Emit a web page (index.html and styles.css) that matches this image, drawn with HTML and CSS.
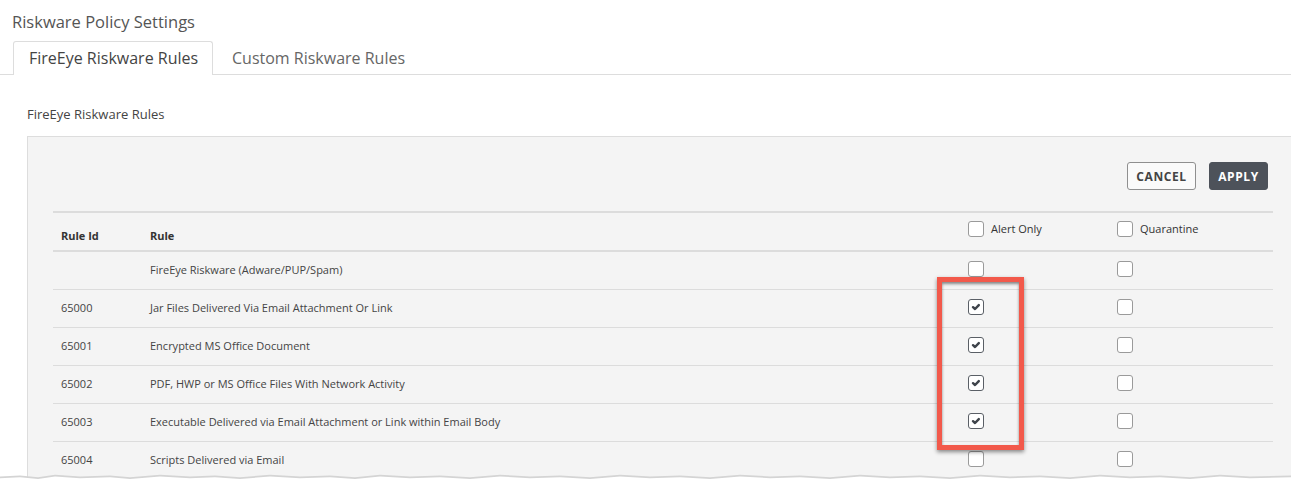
FILE: index.html
```html
<!DOCTYPE html>
<html>
<head>
<meta charset="utf-8">
<link rel="stylesheet" href="styles.css">
</head>
<body>
<div class="page">
  <h1 class="title">Riskware Policy Settings</h1>
  <div class="tabs">
    <div class="tab active">FireEye Riskware Rules</div>
    <div class="tab">Custom Riskware Rules</div>
  </div>
  <div class="section-label">FireEye Riskware Rules</div>
  <div class="panel">
    <div class="actions">
      <button class="btn btn-cancel">CANCEL</button>
      <button class="btn btn-apply">APPLY</button>
    </div>
    <div class="grid">
      <div class="row head">
        <div class="cell id">Rule Id</div>
        <div class="cell rule">Rule</div>
        <div class="cell chk"><span class="box"></span><span class="chk-label">Alert Only</span></div>
        <div class="cell chk"><span class="box"></span><span class="chk-label">Quarantine</span></div>
      </div>
      <div class="row">
        <div class="cell id"></div>
        <div class="cell rule">FireEye Riskware (Adware/PUP/Spam)</div>
        <div class="cell chk"><span class="box"></span></div>
        <div class="cell chk"><span class="box"></span></div>
      </div>
      <div class="row">
        <div class="cell id">65000</div>
        <div class="cell rule">Jar Files Delivered Via Email Attachment Or Link</div>
        <div class="cell chk"><span class="box checked"><svg viewBox="0 0 16 16"><path d="M4.6 8.2 L6.9 10.3 L11.2 5.9" /></svg></span></div>
        <div class="cell chk"><span class="box"></span></div>
      </div>
      <div class="row">
        <div class="cell id">65001</div>
        <div class="cell rule">Encrypted MS Office Document</div>
        <div class="cell chk"><span class="box checked"><svg viewBox="0 0 16 16"><path d="M4.6 8.2 L6.9 10.3 L11.2 5.9" /></svg></span></div>
        <div class="cell chk"><span class="box"></span></div>
      </div>
      <div class="row">
        <div class="cell id">65002</div>
        <div class="cell rule">PDF, HWP or MS Office Files With Network Activity</div>
        <div class="cell chk"><span class="box checked"><svg viewBox="0 0 16 16"><path d="M4.6 8.2 L6.9 10.3 L11.2 5.9" /></svg></span></div>
        <div class="cell chk"><span class="box"></span></div>
      </div>
      <div class="row">
        <div class="cell id">65003</div>
        <div class="cell rule">Executable Delivered via Email Attachment or Link within Email Body</div>
        <div class="cell chk"><span class="box checked"><svg viewBox="0 0 16 16"><path d="M4.6 8.2 L6.9 10.3 L11.2 5.9" /></svg></span></div>
        <div class="cell chk"><span class="box"></span></div>
      </div>
      <div class="row last">
        <div class="cell id">65004</div>
        <div class="cell rule">Scripts Delivered via Email</div>
        <div class="cell chk"><span class="box"></span></div>
        <div class="cell chk"><span class="box"></span></div>
      </div>
    </div>
  </div>
  <div class="highlight"></div>
  <svg class="torn" viewBox="0 0 1291 14" preserveAspectRatio="none">
    <path class="torn-shadow" d="M0 4 L20 3 L38 5 L55 2 L80 4 L110 3 L130 5 L160 2 L190 4 L215 3 L240 5 L270 2 L300 4 L330 3 L355 5 L380 2 L410 4 L440 3 L470 5 L500 2 L530 4 L560 3 L590 5 L620 2 L650 4 L680 3 L710 5 L740 2 L770 4 L800 3 L830 5 L860 2 L890 4 L920 3 L950 5 L980 2 L1010 4 L1040 3 L1070 5 L1100 2 L1130 4 L1160 3 L1190 5 L1220 2 L1250 4 L1291 3 L1291 14 L0 14 Z"/>
    <path class="torn-fill" d="M0 6 L20 5 L38 7 L55 4 L80 6 L110 5 L130 7 L160 4 L190 6 L215 5 L240 7 L270 4 L300 6 L330 5 L355 7 L380 4 L410 6 L440 5 L470 7 L500 4 L530 6 L560 5 L590 7 L620 4 L650 6 L680 5 L710 7 L740 4 L770 6 L800 5 L830 7 L860 4 L890 6 L920 5 L950 7 L980 4 L1010 6 L1040 5 L1070 7 L1100 4 L1130 6 L1160 5 L1190 7 L1220 4 L1250 6 L1291 5 L1291 14 L0 14 Z"/>
  </svg>
</div>
</body>
</html>
```
FILE: styles.css
```css
* { box-sizing: border-box; }
html, body {
  margin: 0;
  padding: 0;
  background: #fff;
  height: 485px;
  overflow: hidden;
}
body {
  font-family: "Open Sans", "Liberation Sans", sans-serif;
  color: #4a4a4a;
}
.page {
  position: relative;
  height: 485px;
  overflow: hidden;
  padding-top: 11px;
}
.title {
  margin: 0 0 0 12px;
  font-size: 16.5px;
  font-weight: 400;
  line-height: 22px;
  color: #555;
}
.tabs {
  display: flex;
  margin-top: 8px;
  padding-left: 13px;
  border-bottom: 1px solid #ddd;
  height: 34px;
}
.tab {
  font-size: 16px;
  line-height: 32px;
  padding: 0 15px;
  color: #666;
  border: 1px solid transparent;
  border-bottom: none;
  border-radius: 3px 3px 0 0;
  margin-bottom: -1px;
  white-space: nowrap;
}
.tab.active {
  background: #fff;
  border-color: #ddd;
  color: #444;
  height: 34px;
  width: 200px;
}
.tab + .tab { padding-left: 18px; }
.section-label {
  margin: 30px 0 0 27px;
  font-size: 13px;
  line-height: 18px;
  color: #444;
}
.panel {
  margin: 13px 0 0 27px;
  background: #f4f4f4;
  border: 1px solid #ddd;
  border-right: none;
  padding: 25px 18px 0 25px;
  height: 360px;
}
.actions {
  display: flex;
  justify-content: flex-end;
  gap: 13px;
  padding-right: 5px;
}
.btn {
  font-family: "Open Sans", "Liberation Sans", sans-serif;
  font-size: 12px;
  font-weight: 700;
  letter-spacing: 0.6px;
  height: 28px;
  border-radius: 3px;
  padding: 0;
}
.btn-cancel {
  width: 69px;
  background: #fafafa;
  border: 1px solid #8f8f8f;
  color: #444;
}
.btn-apply {
  width: 59px;
  background: #4d525a;
  border: 1px solid #4d525a;
  color: #fff;
}
.grid {
  margin-top: 21px;
  border-top: 2px solid #dcdcdc;
  width: 1220px;
}
.row {
  display: grid;
  grid-template-columns: 89px 818px 149px 164px;
  height: 38px;
  border-bottom: 1px solid #dcdcdc;
  font-size: 11px;
  color: #444;
}
.row.head {
  height: 39px;
  border-bottom: 2px solid #dcdcdc;
  font-weight: 700;
  color: #333;
}
.cell {
  display: flex;
  align-items: center;
  padding-left: 8px;
  padding-bottom: 3px;
}
.head .cell.id, .head .cell.rule {
  align-items: flex-end;
  padding-bottom: 7px;
}
.head .cell.chk {
  align-items: flex-start;
  padding-top: 8px;
  font-weight: 400;
}
.chk-label {
  margin-left: 7px;
  line-height: 16px;
}
.box {
  width: 16px;
  height: 16px;
  border: 1px solid #9a9a9a;
  border-radius: 3px;
  background: #fff;
  display: inline-block;
  flex: none;
}
.box.checked {
  border-color: #5a5f66;
}
.box svg {
  display: block;
  width: 14px;
  height: 14px;
}
.box svg path {
  fill: none;
  stroke: #3f444b;
  stroke-width: 2.8;
  stroke-linecap: round;
  stroke-linejoin: round;
}
.highlight {
  position: absolute;
  left: 937px;
  top: 277px;
  width: 87px;
  height: 173px;
  border: 5px solid #f2594b;
  box-shadow: 0 2px 4px rgba(0,0,0,0.45), inset 0 2px 3px rgba(0,0,0,0.45);
}
.torn {
  position: absolute;
  left: 0;
  bottom: 0;
  width: 1291px;
  height: 12px;
}
.torn-shadow { fill: #d4d4d4; }
.torn-fill { fill: #fff; }
```
